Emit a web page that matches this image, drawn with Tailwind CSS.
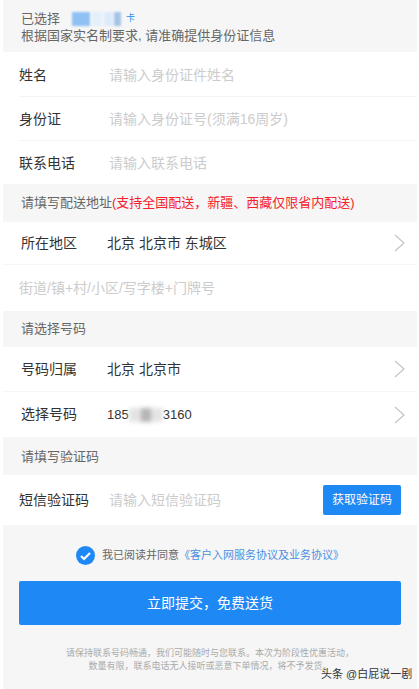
<!DOCTYPE html>
<html lang="zh-CN">
<head>
  <meta charset="UTF-8" />
  <meta name="viewport" content="width=device-width, initial-scale=1.0" />
  <title>立即提交</title>
  <script src="https://cdn.jsdelivr.net/npm/@tailwindcss/browser@4"></script>
</head>
<body class="bg-white font-['Liberation_Sans','Noto_Sans_CJK_SC',sans-serif] overflow-hidden">
  <div class="relative w-[419px] h-[689px] pl-[3px] pr-[2px] flex flex-col overflow-hidden">

    <!-- top notice -->
    <div class="h-[52px] shrink-0 bg-[#f6f6f6] pl-[18px] pt-[10px] text-[13px] leading-[17px] text-[#666]">
      <div class="flex items-center">
        <span>已选择</span>
        <span class="ml-[12px] w-[49px] h-[14px] flex">
          <i class="block w-[18px] h-[14px] bg-[#8fc1f5] blur-[1px]"></i>
          <i class="block w-[10px] h-[14px] ml-[2px] bg-[#e3effb] blur-[1px]"></i>
          <i class="block w-[9px] h-[14px] ml-[2px] bg-[#dcebfb] blur-[1px]"></i>
          <i class="block w-[7px] h-[14px] ml-[1px] bg-[#a4c4e6] blur-[1px]"></i>
        </span>
        <span class="ml-[5px] text-[9px] text-[#2d8cf0]">卡</span>
      </div>
      <div>根据国家实名制要求, 请准确提供身份证信息</div>
    </div>

    <!-- personal info -->
    <div class="pl-[16px] pt-[1px] text-[14px] text-[#333]">
      <div class="h-[44px] pt-[2px] flex items-center border-b border-[#f3f3f3]">
        <span class="w-[90px]">姓名</span><span class="text-[#ccc]">请输入身份证件姓名</span>
      </div>
      <div class="h-[44px] pt-[2px] flex items-center border-b border-[#f3f3f3]">
        <span class="w-[90px]">身份证</span><span class="text-[#ccc]">请输入身份证号(须满16周岁)</span>
      </div>
      <div class="h-[43px] pt-[2px] flex items-center">
        <span class="w-[90px]">联系电话</span><span class="text-[#ccc]">请输入联系电话</span>
      </div>
    </div>

    <!-- address -->
    <div class="h-[38px] shrink-0 bg-[#f6f6f6] pl-[18px] flex items-center text-[13px] text-[#666]">
      请填写配送地址<span class="text-[#f5222d]">(支持全国配送，新疆、西藏仅限省内配送)</span>
    </div>
    <div class="h-[43px] shrink-0 flex items-center pl-[18px] pr-[11px] border-b border-[#f7f7f7] text-[14px] text-[#333]">
      <span class="w-[86px]">所在地区</span><span class="flex-1">北京 北京市 东城区</span>
      <svg class="w-[12px] h-[18px]" viewBox="0 0 12 18" fill="none" stroke="#c4c4c4" stroke-width="1.2"><path d="M1 1l9 8-9 8" /></svg>
    </div>
    <div class="h-[46px] shrink-0 flex items-center pl-[16px] pt-[1px] text-[14px] text-[#ccc]">街道/镇+村/小区/写字楼+门牌号</div>

    <!-- number -->
    <div class="h-[36px] shrink-0 bg-[#f6f6f6] pl-[18px] flex items-center text-[13px] text-[#666]">请选择号码</div>
    <div class="h-[45px] shrink-0 flex items-center pl-[18px] pr-[11px] border-b border-[#f7f7f7] text-[14px] text-[#333]">
      <span class="w-[86px]">号码归属</span><span class="flex-1">北京 北京市</span>
      <svg class="w-[12px] h-[18px]" viewBox="0 0 12 18" fill="none" stroke="#c4c4c4" stroke-width="1.2"><path d="M1 1l9 8-9 8" /></svg>
    </div>
    <div class="h-[45px] shrink-0 flex items-center pl-[18px] pr-[11px] text-[14px] text-[#333]">
      <span class="w-[86px]">选择号码</span>
      <span class="flex-1 flex items-center text-[13px]">185<span class="w-[34px] h-[14px] bg-[#e4e4e4] blur-[2px] flex justify-center"><i class="block w-[10px] h-[14px] bg-[#b5b5b5]"></i></span>3160</span>
      <svg class="w-[12px] h-[18px]" viewBox="0 0 12 18" fill="none" stroke="#c4c4c4" stroke-width="1.2"><path d="M1 1l9 8-9 8" /></svg>
    </div>

    <!-- sms -->
    <div class="h-[38px] shrink-0 bg-[#f6f6f6] pl-[18px] pt-[2px] flex items-center text-[13px] text-[#666]">请填写验证码</div>
    <div class="h-[50px] shrink-0 flex items-center px-[16px] text-[14px] text-[#333]">
      <span class="w-[90px]">短信验证码</span>
      <span class="flex-1 text-[#ccc]">请输入短信验证码</span>
      <button class="w-[78px] h-[30px] bg-[#1e88f5] rounded-[2px] text-white text-[12px]">获取验证码</button>
    </div>

    <!-- submit -->
    <div class="flex-1 bg-[#f6f6f6] px-[16px] pt-[21px]">
      <div class="flex items-center h-[18px] pl-[57px] text-[11px]">
        <svg class="w-[19px] h-[19px] mr-[7px] shrink-0" viewBox="0 0 19 19"><circle cx="9.5" cy="9.5" r="9.5" fill="#1e88f5" /><path d="M5 10l3 3 6-6" fill="none" stroke="#fff" stroke-width="2.2" /></svg>
        <span class="text-[#666]">我已阅读并同意</span><span class="text-[#4a90e2]">《客户入网服务协议及业务协议》</span>
      </div>
      <button class="block w-[382px] h-[44px] mt-[17px] bg-[#1e88f5] rounded-[2px] text-white text-[14px]">立即提交，免费送货</button>
      <p class="mt-[22px] text-center text-[9px] leading-[13px] text-[#aaa]">请保持联系号码畅通，我们可能随时与您联系。本次为阶段性优惠活动，<br />数量有限，联系电话无人接听或恶意下单情况，将不予发货。</p>
    </div>

    <!-- watermark -->
    <div class="absolute left-[321px] top-[666px] text-[11px] leading-[16px] text-[#333] whitespace-nowrap">头条 @白屁说一剧</div>
  </div>
</body>
</html>
